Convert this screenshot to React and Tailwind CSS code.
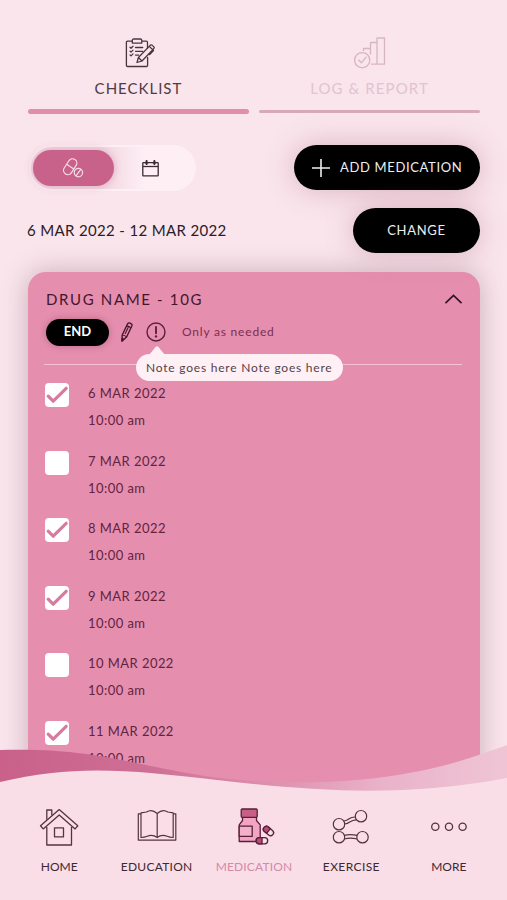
import React from "react";

const days = [
  { date: "6 MAR 2022", done: true },
  { date: "7 MAR 2022", done: false },
  { date: "8 MAR 2022", done: true },
  { date: "9 MAR 2022", done: true },
  { date: "10 MAR 2022", done: false },
  { date: "11 MAR 2022", done: true },
];

function ClipboardIcon() {
  return (
    <svg className="h-[30px] w-[30px]" viewBox="0 0 30 30" fill="none" stroke="#4a3440" strokeWidth="1.3" strokeLinecap="round" strokeLinejoin="round">
      <path d="M7 3.2H2.6q-1.2 0-1.2 1.2v22.9q0 1.2 1.2 1.2h18.8q1.2 0 1.2-1.2v-7.8M17.5 3.2h3.7q1.3 0 1.3 1.2v6" />
      <path d="M8.8 1h6.5q1.5 0 1.5 1.6v2.5H7.3V2.6Q7.3 1 8.8 1z" />
      <path d="M10.5 9.5h7.2M10.5 13.3h7.2M10.5 17.1h3.2M5 9.3l1 1 2-2M5 13.1l1 1 2-2M5 16.9l1 1 2-2" />
      <path d="M12 24.5l1.4-5L24.2 8.4l3.6 3.4L17 23zM24.2 8.4l1.4-1.3q.7-.6 1.4 0l1.9 1.8q.7.7 0 1.4l-1.1 1.5M13.4 19.5l3.6 3.5M28.5 12.5l-3.8 4" />
    </svg>
  );
}

function ReportIcon() {
  return (
    <svg className="h-[32px] w-[32px]" viewBox="0 0 32 32" fill="none" stroke="#d6b6c3" strokeWidth="1.3" strokeLinejoin="round">
      <path d="M9.5 14v-2.5h7v-6H23V1h7.5v26.2H17M16.5 11.5v6M23 5.5v21.5" />
      <circle cx="8.2" cy="23.2" r="7.6" />
      <path d="M4.7 23l2.7 2.8 4.7-5.6" strokeLinecap="round" />
    </svg>
  );
}

function PillsIcon() {
  return (
    <svg className="h-[20px] w-[22px]" viewBox="0 0 22 20" fill="none" stroke="#f8dbe6" strokeWidth="1.2">
      <rect x="-4.3" y="-8.6" width="8.6" height="17.2" rx="4.3" transform="translate(8.2 8.7) rotate(33)" />
      <path d="M4.6 6.3l7.2 4.7" />
      <circle cx="16.4" cy="14.6" r="4.2" />
      <path d="M14 17.9l4.8-6.6" />
    </svg>
  );
}

function CalendarIcon() {
  return (
    <svg className="h-[17px] w-[17px]" viewBox="0 0 17 17" fill="none" stroke="#3c2a33" strokeWidth="1.3" strokeLinejoin="round">
      <rect x=".8" y="2.7" width="15.4" height="13.2" rx=".6" />
      <path d="M.8 6.5h15.4" />
      <path d="M4.6.8v3.4M12.4.8v3.4M3.4 2.6h2.4M11.2 2.6h2.4" strokeWidth="1.8" strokeLinecap="round" />
    </svg>
  );
}

function PencilIcon() {
  return (
    <svg className="h-[20px] w-[12px]" viewBox="0 0 12 20" fill="none" stroke="#43172b" strokeWidth="1.4" strokeLinejoin="round">
      <path d="M1 19l.2-6L6.5 2q.9-1.6 2.4-.9l1.1.5q1.5.8.8 2.4L5.6 15z" />
      <path d="M1.2 13q2.8.2 4.4 2M5.6 3.9q2.8.4 4.2 2.1M4 12l3.3-6.7" strokeWidth="1.1" />
      <path d="M1 19l.1-2.6 1.7.9z" fill="#43172b" />
    </svg>
  );
}

function AlertIcon() {
  return (
    <svg className="h-[20px] w-[20px]" viewBox="0 0 20 20" fill="none" stroke="#5a203c">
      <circle cx="10" cy="10" r="9" strokeWidth="1.4" />
      <path d="M10 5v6.3" strokeWidth="1.9" strokeLinecap="round" />
      <circle cx="10" cy="14.4" r="1.2" fill="#5a203c" stroke="none" />
    </svg>
  );
}

function HomeIcon() {
  return (
    <svg className="h-[40px] w-[40px]" viewBox="0 0 40 40" fill="none" stroke="#54333f" strokeWidth="1.3" strokeLinejoin="round">
      <path d="M7.8 20v18h24.7V20M7.8 12.7V3h5v5.3" />
      <path d="M20.2 2.6L1.5 18.8l2.7 3.1 16-13.9 15.9 13.9 2.7-3.1z" />
      <rect x="15.5" y="20.8" width="9" height="9" />
    </svg>
  );
}

function BookIcon() {
  return (
    <svg className="h-[40px] w-[40px]" viewBox="0 0 40 40" fill="none" stroke="#54333f" strokeWidth="1.2" strokeLinejoin="round">
      <path d="M4 6.8H1.3v26.3h37.5V6.8h-2.6" />
      <path d="M20.2 6.5Q14.7 1.4 9.5 5L4 5.8v24.7q3.5-.2 6.2-1.3 5.4-2.2 10 1.3M20.2 6.5q5.4-5.1 10.6-1.5l5.4.8v24.7q-3.5-.2-6.1-1.3-5.4-2.2-9.9 1.3zM20.2 6.5v24" />
    </svg>
  );
}

function MedicineIcon() {
  return (
    <svg className="ml-1 h-[40px] w-[40px]" viewBox="0 0 40 40" fill="none" stroke="#571f39" strokeWidth="1.3" strokeLinejoin="round">
      <path d="M6.5 10.3h14v3.2l3.7 4.3v16.7H3.2V17.8l3.3-4.3z" fill="#f2a5c2" />
      <rect x="5.2" y="2" width="16" height="8.3" rx="1" fill="#c85f87" />
      <rect x="3.2" y="19.2" width="13" height="10.2" fill="#f3b1c9" />
      <g transform="translate(32.5 24) rotate(40)">
        <rect x="-5.7" y="-3" width="11.4" height="6" rx="3" fill="#f8dce6" />
        <path d="M0-3h-2.7a3 3 0 0 0 0 6H0z" fill="#b64d76" />
      </g>
      <rect x="20.2" y="30.7" width="11.5" height="6.1" rx="3" fill="#f8dce6" />
      <path d="M26 30.7h-2.8a3 3 0 0 0 0 6.1H26z" fill="#b64d76" />
    </svg>
  );
}

function DumbbellIcon() {
  return (
    <svg className="h-[40px] w-[40px]" viewBox="0 0 40 40" fill="none" stroke="#54333f" strokeWidth="1.2">
      <circle cx="8" cy="17.2" r="5.7" />
      <circle cx="30" cy="9.2" r="5.7" />
      <circle cx="8" cy="30.2" r="5.7" />
      <circle cx="31.5" cy="30.2" r="5.7" />
      <path d="M12.9 14q3-.3 5.2-2.2 2.9-2 6.4-1.8M13.5 17q3-.3 5.2-2 3-2.1 6.6-2.2M13.3 28.4q6-1.7 12.8 0M13.3 32q6-1.6 12.8 0" />
    </svg>
  );
}

function MoreIcon() {
  return (
    <svg className="h-[40px] w-[40px]" viewBox="0 0 40 40" fill="none" stroke="#54333f" strokeWidth="1.3">
      <circle cx="6.3" cy="19.8" r="3.6" />
      <circle cx="20" cy="19.8" r="3.6" />
      <circle cx="33.6" cy="19.8" r="3.6" />
    </svg>
  );
}

function Checkbox({ done }) {
  return (
    <span className="mt-0.5 flex size-6 shrink-0 items-center justify-center rounded-[4px] bg-white">
      {done && (
        <svg className="size-6" viewBox="0 0 24 24" fill="none" stroke="#d67b9f" strokeWidth="3.2" strokeLinecap="round" strokeLinejoin="round">
          <path d="M3.2 13.2l5 5L21.2 5.3" />
        </svg>
      )}
    </span>
  );
}

const tabs = [
  { label: "HOME", Icon: HomeIcon, style: "text-[#402831] tracking-[0px]" },
  { label: "EDUCATION", Icon: BookIcon, style: "text-[#402831] tracking-[0.25px]" },
  { label: "MEDICATION", Icon: MedicineIcon, style: "text-[#d48ba7] tracking-[0.15px]" },
  { label: "EXERCISE", Icon: DumbbellIcon, style: "text-[#402831] tracking-[0.4px]" },
  { label: "MORE", Icon: MoreIcon, style: "text-[#402831] tracking-[0px]" },
];

export default function App() {
  return (
    <div className="relative h-[900px] w-full overflow-hidden bg-[#fae5ec] font-[Lato,sans-serif] whitespace-nowrap">
      <header className="grid grid-cols-2 gap-2.5 pt-[37px] pr-[27px] pl-7">
        <div className="flex h-[77px] flex-col items-center">
          <div className="flex h-8 items-center pl-0.5"><ClipboardIcon /></div>
          <span className="mt-[9px] text-[15px] leading-[21px] tracking-[1px] text-[#4e3b45]">CHECKLIST</span>
          <span className="mt-auto h-[5px] w-full rounded-full bg-[#e28dab]" />
        </div>
        <div className="flex h-[77px] flex-col items-center">
          <div className="flex h-8 items-center"><ReportIcon /></div>
          <span className="mt-[9px] text-[15px] leading-[21px] tracking-[1.1px] text-[#e0c4cf]">LOG &amp; REPORT</span>
          <span className="mt-auto mb-px h-[3px] w-full rounded-full bg-[#d8a9bb]" />
        </div>
      </header>

      <div className="mt-[31px] flex h-[46px] items-start justify-between pr-[27px] pl-[29px]">
        <div className="flex h-[46px] w-[167px] items-center rounded-full border-2 border-[#fdf0f5] bg-linear-to-r from-[#f3d8e2] from-45% to-[#feeff5] to-70% pl-[2px]">
          <div className="flex h-9 w-[81px] shrink-0 items-center justify-center rounded-full bg-[#c9628a] pr-0.5 shadow-[0_0_8px_#dba8bc]"><PillsIcon /></div>
          <div className="flex flex-1 justify-center pr-2"><CalendarIcon /></div>
        </div>
        <button className="flex h-[45px] w-[186px] items-center rounded-full bg-black pl-[18px] text-[13px] tracking-[0.65px] text-[#eee] shadow-[0_0_28px_rgba(160,85,115,0.35)]">
          <svg className="mr-[10px] size-[18px]" viewBox="0 0 18 18" stroke="#eee" strokeWidth="1.6"><path d="M9 0v18M0 9h18" /></svg>
          ADD MEDICATION
        </button>
      </div>

      <div className="mt-[17px] flex h-[45px] items-center justify-between pr-[27px] pl-[27px]">
        <span className="text-[15px] tracking-[0.35px] text-[#2c2027]">6 MAR 2022 - 12 MAR 2022</span>
        <button className="h-[45px] w-[127px] rounded-full bg-black text-[13px] tracking-[0.7px] text-[#eee] shadow-[0_0_28px_rgba(160,85,115,0.35)]">CHANGE</button>
      </div>

      <main className="mt-[19px] mr-[27px] ml-7 h-[560px] rounded-t-[18px] bg-[#e68eae] pt-[17px] pr-[18px] pl-[17px] shadow-[0_0_26px_rgba(115,75,92,0.36)]">
        <div className="flex h-5 items-center justify-between pl-px">
          <h1 className="text-[15px] tracking-[1.65px] text-[#43172b]">DRUG NAME - 10G</h1>
          <svg className="h-[10px] w-[17px]" viewBox="0 0 17 10" fill="none" stroke="#341323" strokeWidth="1.7" strokeLinecap="round"><path d="M1 8.7l7.5-7.2L16 8.7" /></svg>
        </div>
        <div className="mt-[9px] flex h-7 items-center pl-px">
          <button className="h-[27px] w-[63px] rounded-full bg-black text-[13px] font-bold text-white shadow-[0_0_7px_rgba(80,20,45,0.3)]">END</button>
          <span className="ml-[12px]"><PencilIcon /></span>
          <span className="relative ml-[13px]">
            <AlertIcon />
            <span className="absolute top-[32px] left-[-10px] flex h-[27px] w-[207px] items-center rounded-full bg-[#fef0f5] pl-[10px] text-[12px] tracking-[0.78px] text-[#553f49]">
              <svg className="absolute -top-[8px] left-[13px] h-[9px] w-[16px]" viewBox="0 0 16 9" fill="#fef0f5"><path d="M0 9L6.8.8q1.2-1.3 2.4 0L16 9z" /></svg>
              Note goes here Note goes here
            </span>
          </span>
          <span className="ml-[16px] text-[12px] tracking-[0.8px] text-[#7a2f50]">Only as needed</span>
        </div>
        <div className="mt-[18px] -ml-px h-px bg-[#f5c1d3]" />
        <ul className="mt-[16px]">
          {days.map((day) => (
            <li key={day.date} className="flex h-[67.5px] items-start">
              <Checkbox done={day.done} />
              <div className="ml-[19px] text-[13px] leading-[27px] tracking-[0.45px] text-[#5f2440]">
                <div className="-mt-px">{day.date}</div>
                <div>10:00 am</div>
              </div>
            </li>
          ))}
        </ul>
      </main>

      <footer className="absolute inset-x-0 bottom-0 h-[160px]">
        <svg className="absolute inset-0 h-full w-full" viewBox="0 740 507 160" preserveAspectRatio="none">
          <defs>
            <linearGradient id="ribbon">
              <stop stopColor="#c9618a" />
              <stop offset=".3" stopColor="#cf6f95" />
              <stop offset=".52" stopColor="#dc8eac" />
              <stop offset=".75" stopColor="#e9b2c8" />
              <stop offset="1" stopColor="#efc5d5" />
            </linearGradient>
          </defs>
          <path d="M0 750C85 748 115 760 187 773C255 785 340 787 420 771C455 764 485 753 507 745V900H0z" fill="url(#ribbon)" />
          <path d="M0 782C75 764 130 770 217 780C320 792 405 797 507 778V900H0z" fill="#f9dee8" />
        </svg>
        <nav className="relative flex pt-[67px] pl-[10.5px]">
          {tabs.map(({ label, Icon, style }) => (
            <div key={label} className="flex w-[97.4px] shrink-0 flex-col items-center">
              <Icon />
              <span className={`mt-[11px] text-[12px] leading-[18px] ${style}`}>{label}</span>
            </div>
          ))}
        </nav>
      </footer>
    </div>
  );
}
